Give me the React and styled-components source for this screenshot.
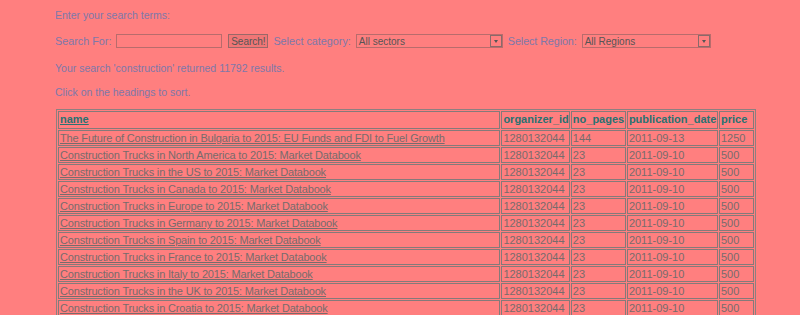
import React from "react";
import styled, { createGlobalStyle } from "styled-components";

const Global = createGlobalStyle`
  html, body { margin: 0; padding: 0; background: #ff7f7f; }
  body { font-family: "Liberation Sans", Arial, sans-serif; font-size: 10.5px; }
`;

const Page = styled.div`
  padding: 8px 0 0 55px;
  color: #7d78aa;
`;

const Para = styled.p`
  margin: 0 0 ${(p) => p.$mb || 12}px 0;
  line-height: 14px;
  font-size: 10.5px;
`;

const SearchRow = styled.form`
  display: flex;
  align-items: center;
  gap: 5px;
  margin: 0 0 12px 0;
  height: 16px;
`;

const Label = styled.span`
  color: #7d78aa;
  font-size: 10.8px;
  letter-spacing: ${(p) => p.$ls || 0}px;
`;

const TextInput = styled.input`
  box-sizing: border-box;
  width: 106px;
  height: 14px;
  border: 1px solid #b86c6c;
  background: transparent;
  padding: 0 1px;
  margin: 0 1px 0 0;
`;

const Button = styled.button`
  box-sizing: border-box;
  width: 40px;
  height: 14px;
  padding: 0;
  font-family: "Liberation Sans", Arial, sans-serif;
  font-size: 10px;
  color: #555;
  background: #f07676;
  border: 1px solid #9a6868;
  line-height: 11px;
`;

const Select = styled.div`
  box-sizing: border-box;
  width: ${(p) => p.$w}px;
  height: 14px;
  border: 1px solid #b86c6c;
  display: flex;
  align-items: center;
  justify-content: space-between;
  font-size: 10px;
  color: #555;
  padding-left: 2px;
`;

const Arrow = styled.span`
  box-sizing: border-box;
  width: 12px;
  height: 12px;
  border: 1px solid #8a6a6a;
  display: flex;
  align-items: center;
  justify-content: center;
  &::after {
    content: "";
    border-left: 2px solid transparent;
    border-right: 2px solid transparent;
    border-top: 3px solid #555;
  }
`;

const Table = styled.table`
  width: 700px;
  border: 1px solid #8c8080;
  border-spacing: 1px;
  margin-left: 1px;
`;

const Th = styled.th`
  box-sizing: border-box;
  text-align: left;
  font-weight: bold;
  color: #2a7272;
  border: 1px solid #857a7a;
  padding: 1px 0 2px 1px;
  line-height: 13px;
  font-size: 11px;
  white-space: nowrap;
  width: ${(p) => p.$w}px;
  text-decoration: ${(p) => (p.$u ? "underline" : "none")};
`;

const Td = styled.td`
  color: #776c6c;
  border: 1px solid #857a7a;
  padding: 0 0 0 1px;
  line-height: 14px;
  font-size: 11px;
  white-space: nowrap;
`;

const Link = styled.a`
  color: #776c6c;
  font-size: 11px;
  letter-spacing: -0.17px;
  text-decoration: underline;
`;

const rows = [
  ["The Future of Construction in Bulgaria to 2015: EU Funds and FDI to Fuel Growth", "144", "2011-09-13", "1250"],
  ["Construction Trucks in North America to 2015: Market Databook", "23", "2011-09-10", "500"],
  ["Construction Trucks in the US to 2015: Market Databook", "23", "2011-09-10", "500"],
  ["Construction Trucks in Canada to 2015: Market Databook", "23", "2011-09-10", "500"],
  ["Construction Trucks in Europe to 2015: Market Databook", "23", "2011-09-10", "500"],
  ["Construction Trucks in Germany to 2015: Market Databook", "23", "2011-09-10", "500"],
  ["Construction Trucks in Spain to 2015: Market Databook", "23", "2011-09-10", "500"],
  ["Construction Trucks in France to 2015: Market Databook", "23", "2011-09-10", "500"],
  ["Construction Trucks in Italy to 2015: Market Databook", "23", "2011-09-10", "500"],
  ["Construction Trucks in the UK to 2015: Market Databook", "23", "2011-09-10", "500"],
  ["Construction Trucks in Croatia to 2015: Market Databook", "23", "2011-09-10", "500"],
  ["Construction Trucks in Poland to 2015: Market Databook", "23", "2011-09-10", "500"],
];

export default function App() {
  return (
    <>
      <Global />
      <Page>
        <Para $mb={11}>Enter your search terms:</Para>
        <SearchRow onSubmit={(e) => e.preventDefault()}>
          <Label>Search For:</Label>
          <TextInput type="text" />
          <Button type="submit">Search!</Button>
          <Label>Select category:</Label>
          <Select $w={147}>
            <span>All sectors</span>
            <Arrow />
          </Select>
          <Label $ls={-0.1}>Select Region:</Label>
          <Select $w={129}>
            <span>All Regions</span>
            <Arrow />
          </Select>
        </SearchRow>
        <Para $mb={10}>Your search 'construction' returned 11792 results.</Para>
        <Para $mb={10}>Click on the headings to sort.</Para>
        <Table>
          <thead>
            <tr>
              <Th $u $w={442}>name</Th>
              <Th $w={68}>organizer_id</Th>
              <Th $w={55}>no_pages</Th>
              <Th $w={91}>publication_date</Th>
              <Th $w={35}>price</Th>
            </tr>
          </thead>
          <tbody>
            {rows.map((r) => (
              <tr key={r[0]}>
                <Td>
                  <Link href="#">{r[0]}</Link>
                </Td>
                <Td>1280132044</Td>
                <Td>{r[1]}</Td>
                <Td>{r[2]}</Td>
                <Td>{r[3]}</Td>
              </tr>
            ))}
          </tbody>
        </Table>
      </Page>
    </>
  );
}
